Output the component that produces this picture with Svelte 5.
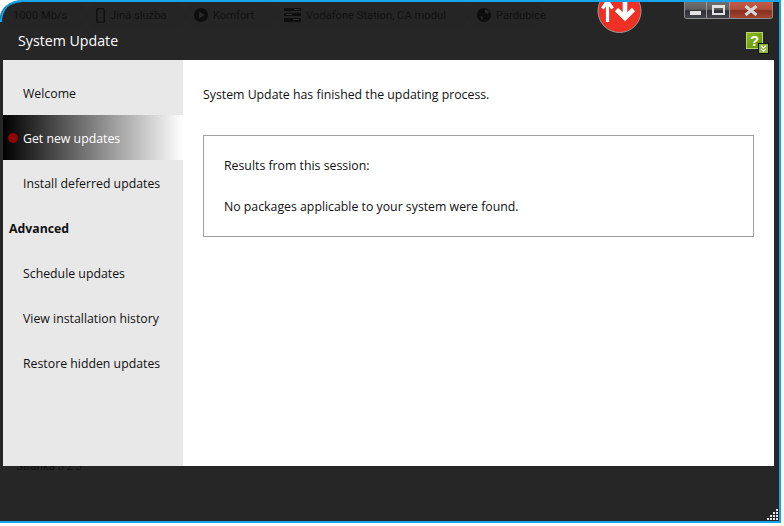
<script>
  const ghosts = [
    { label: '1000 Mb/s', icon: 'none' },
    { label: 'Jiná služba', icon: 'phone' },
    { label: 'Komfort', icon: 'play' },
    { label: 'Vodafone Station, CA modul', icon: 'rack' },
    { label: 'Pardubice', icon: 'globe' }
  ];
</script>

<div class="page">
  <div class="window">
    <div class="corner"></div>
    <div class="ghostbar">
      {#each ghosts as g}
        <div class="ghost {g.icon}">
          {#if g.icon === 'phone'}
            <svg width="9" height="15" viewBox="0 0 9 15"><rect x="0.8" y="0.8" width="7.4" height="13.4" rx="1.4" fill="none" stroke="#111" stroke-width="1.6"/></svg>
          {:else if g.icon === 'play'}
            <svg width="14" height="14" viewBox="0 0 15 15"><circle cx="7.5" cy="7.5" r="7.5" fill="#0e0e0e"/><path d="M5.5 3.8 11.5 7.5 5.5 11.2Z" fill="#2a2a2a"/></svg>
          {:else if g.icon === 'rack'}
            <svg width="17" height="14" viewBox="0 0 17 14"><path d="M0 0h17v3H0zM0 5h17v3H0zM0 10h17v4H0z" fill="#0e0e0e"/><path d="M10 1h6v1h-6zM2 6h6v1H2zM9 11h6v1H9z" fill="#333"/></svg>
          {:else if g.icon === 'globe'}
            <svg width="14" height="14" viewBox="0 0 14 14"><circle cx="7" cy="7" r="7" fill="#0e0e0e"/><path d="M8 1.5 12 3 11 6 8 5ZM3 8l3 1-1 3Z" fill="#2a2a2a"/></svg>
          {/if}
          <span>{g.label}</span>
        </div>
      {/each}
    </div>

    <div class="title">System Update</div>

    <div class="badge">
      <svg width="45" height="33" viewBox="0 0 45 33">
        <circle cx="22.5" cy="11" r="21.5" fill="#ee3124" stroke="#9a9a9a" stroke-width="1"/>
        <path d="M10.5 22V3M5.5 8.5 10.5 1 15.5 8.5" fill="none" stroke="#fff" stroke-width="3.2"/>
        <path d="M28 0V17M19.5 9.5 28 18 36.5 9.5" fill="none" stroke="#fff" stroke-width="4.6"/>
      </svg>
    </div>

    <div class="caption">
      <div class="cap min"><i></i></div>
      <div class="cap max"><i></i></div>
      <div class="cap close">
        <svg width="16" height="11" viewBox="0 0 16 11"><path d="M2.5 1 13.5 10M13.5 1 2.5 10" stroke="#d8d8d8" stroke-width="3"/></svg>
      </div>
    </div>

    <div class="help">
      <span class="q">?</span>
      <span class="sub">
        <svg width="7" height="7" viewBox="0 0 7 7"><path d="M1 .8 3.5 3 6 .8M1 4 3.5 6.2 6 4" fill="none" stroke="#fff" stroke-width="1.2"/></svg>
      </span>
    </div>

    <div class="ghostfoot"><span>Stránka 3 z 3</span></div>

    <div class="client">
      <nav class="side">
        <div class="item">Welcome</div>
        <div class="item active"><span class="dot"></span>Get new updates</div>
        <div class="item">Install deferred updates</div>
        <div class="item head">Advanced</div>
        <div class="item">Schedule updates</div>
        <div class="item">View installation history</div>
        <div class="item">Restore hidden updates</div>
      </nav>
      <main class="content">
        <p class="status">System Update has finished the updating process.</p>
        <section class="results">
          <p>Results from this session:</p>
          <p>No packages applicable to your system were found.</p>
        </section>
      </main>
    </div>

    <svg class="grip" width="12" height="12" viewBox="0 0 12 12">
      <path d="M9 0h2v2H9zM6 3h2v2H6zM9 3h2v2H9zM3 6h2v2H3zM6 6h2v2H6zM9 6h2v2H9zM0 9h2v2H0zM3 9h2v2H3zM6 9h2v2H6zM9 9h2v2H9z" fill="#e6e6e6"/>
    </svg>
  </div>
</div>

<style>
  :global(body) {
    margin: 0;
    background: #fff;
  }
  .page {
    width: 784px;
    height: 526px;
    overflow: hidden;
    background: #fff;
    font-family: "Open Sans", "Noto Sans", sans-serif;
    font-size: 12.3px;
  }
  .window {
    position: relative;
    box-sizing: border-box;
    width: 781px;
    height: 523px;
    background: #262626;
    border-top: 2px solid #17a4ea;
    border-right: 2px solid #17a4ea;
    border-bottom: 2px solid #17a4ea;
    border-top-left-radius: 22px 18px;
    overflow: hidden;
  }
  .corner {
    position: absolute;
    left: 0;
    top: -2px;
    width: 28px;
    height: 22px;
    box-sizing: border-box;
    border-top: 2px solid #17a4ea;
    border-left: 2px solid #17a4ea;
    border-top-left-radius: 24px 20px;
  }
  .ghostbar {
    display: flex;
    height: 26px;
    align-items: center;
    padding-left: 13px;
    color: #111;
    font-family: Roboto, sans-serif;
    font-size: 11.2px;
  }
  .ghost {
    display: flex;
    align-items: center;
    gap: 5px;
    position: relative;
  }
  .ghost::before {
    content: "";
    position: absolute;
    left: -9px;
    right: 9px;
    top: -5px;
    bottom: -5px;
    border-radius: 13px;
    background: #252525;
    z-index: 0;
  }
  .ghost > * {
    position: relative;
  }
  .ghost.none { width: 83px; }
  .ghost.phone { width: 98px; }
  .ghost.play { width: 90px; }
  .ghost.rack { width: 193px; }
  .ghost.globe { width: 75px; }
  .title {
    height: 32px;
    padding: 3px 0 0 18px;
    box-sizing: border-box;
    color: #fff;
    font-size: 14.2px;
    line-height: 20px;
  }
  .badge {
    position: absolute;
    left: 597px;
    top: -2px;
    line-height: 0;
  }
  .caption {
    position: absolute;
    left: 684px;
    top: 0;
    width: 89px;
    height: 17px;
    display: flex;
    border: 1px solid #8d8d8d;
    border-top: 0;
    border-radius: 0 0 3px 3px;
    overflow: hidden;
    box-sizing: border-box;
  }
  .cap {
    display: flex;
    align-items: center;
    justify-content: center;
    height: 100%;
    box-sizing: border-box;
    border-right: 1px solid #9a9a9a;
    background: linear-gradient(#6f6f6f 0, #5f5f5f 45%, #2f2f35 55%, #44444c 100%);
  }
  .min { width: 22px; }
  .min i {
    width: 11px;
    height: 4px;
    margin-top: 5px;
    background: #e2e2e2;
  }
  .max { width: 23px; }
  .max i {
    box-sizing: border-box;
    width: 13px;
    height: 10px;
    border: 2px solid #e2e2e2;
    border-top-width: 3px;
  }
  .close {
    flex: 1;
    border-right: 0;
    background: linear-gradient(#c25c48 0, #b0503c 45%, #85301e 55%, #a54532 100%);
  }
  .help {
    position: absolute;
    left: 746px;
    top: 30px;
    width: 15px;
    height: 15px;
    border: 1px solid #111;
    outline: 1px solid #b9d27a;
    outline-offset: -1px;
    background: linear-gradient(135deg, #8dbb1c, #5d8f00);
    color: #fff;
    text-align: center;
  }
  .q {
    display: block;
    font: bold 15px/15px "Liberation Sans", sans-serif;
  }
  .sub {
    position: absolute;
    left: 11px;
    top: 10px;
    width: 9px;
    height: 9px;
    border: 1px solid #111;
    background: #8fb53a;
    display: flex;
    align-items: center;
    justify-content: center;
  }
  .client {
    position: relative;
    display: flex;
    height: 406px;
    margin-left: 3px;
    width: 771px;
    background: #fff;
    color: #111;
  }
  .side {
    width: 180px;
    flex: none;
    background: #e8e8e8;
    padding-top: 10px;
    box-sizing: border-box;
  }
  .item {
    height: 45px;
    line-height: 47px;
    padding-left: 20px;
    white-space: nowrap;
  }
  .head {
    padding-left: 6px;
    font-weight: 700;
  }
  .active {
    position: relative;
    color: #fff;
    background: linear-gradient(90deg, #000 0, #fff 100%);
  }
  .dot {
    position: absolute;
    left: 5px;
    top: 18px;
    width: 10px;
    height: 10px;
    border-radius: 50%;
    background: #8f0505;
  }
  .content {
    flex: 1;
    padding: 27px 20px 0;
    box-sizing: border-box;
  }
  .status {
    margin: 0 0 32px;
    line-height: 16px;
  }
  .results {
    box-sizing: border-box;
    height: 102px;
    border: 1px solid #a0a0a0;
    padding: 22px 20px 0;
  }
  .results p {
    margin: 0 0 25px;
    line-height: 16px;
  }
  .ghostfoot {
    height: 0;
    position: relative;
  }
  .ghostfoot span {
    position: absolute;
    left: 16px;
    top: 399px;
    color: #111;
    font-family: Roboto, sans-serif;
    font-size: 11.5px;
    line-height: 14px;
  }
  .grip {
    position: absolute;
    right: 0;
    bottom: 0;
  }
</style>
